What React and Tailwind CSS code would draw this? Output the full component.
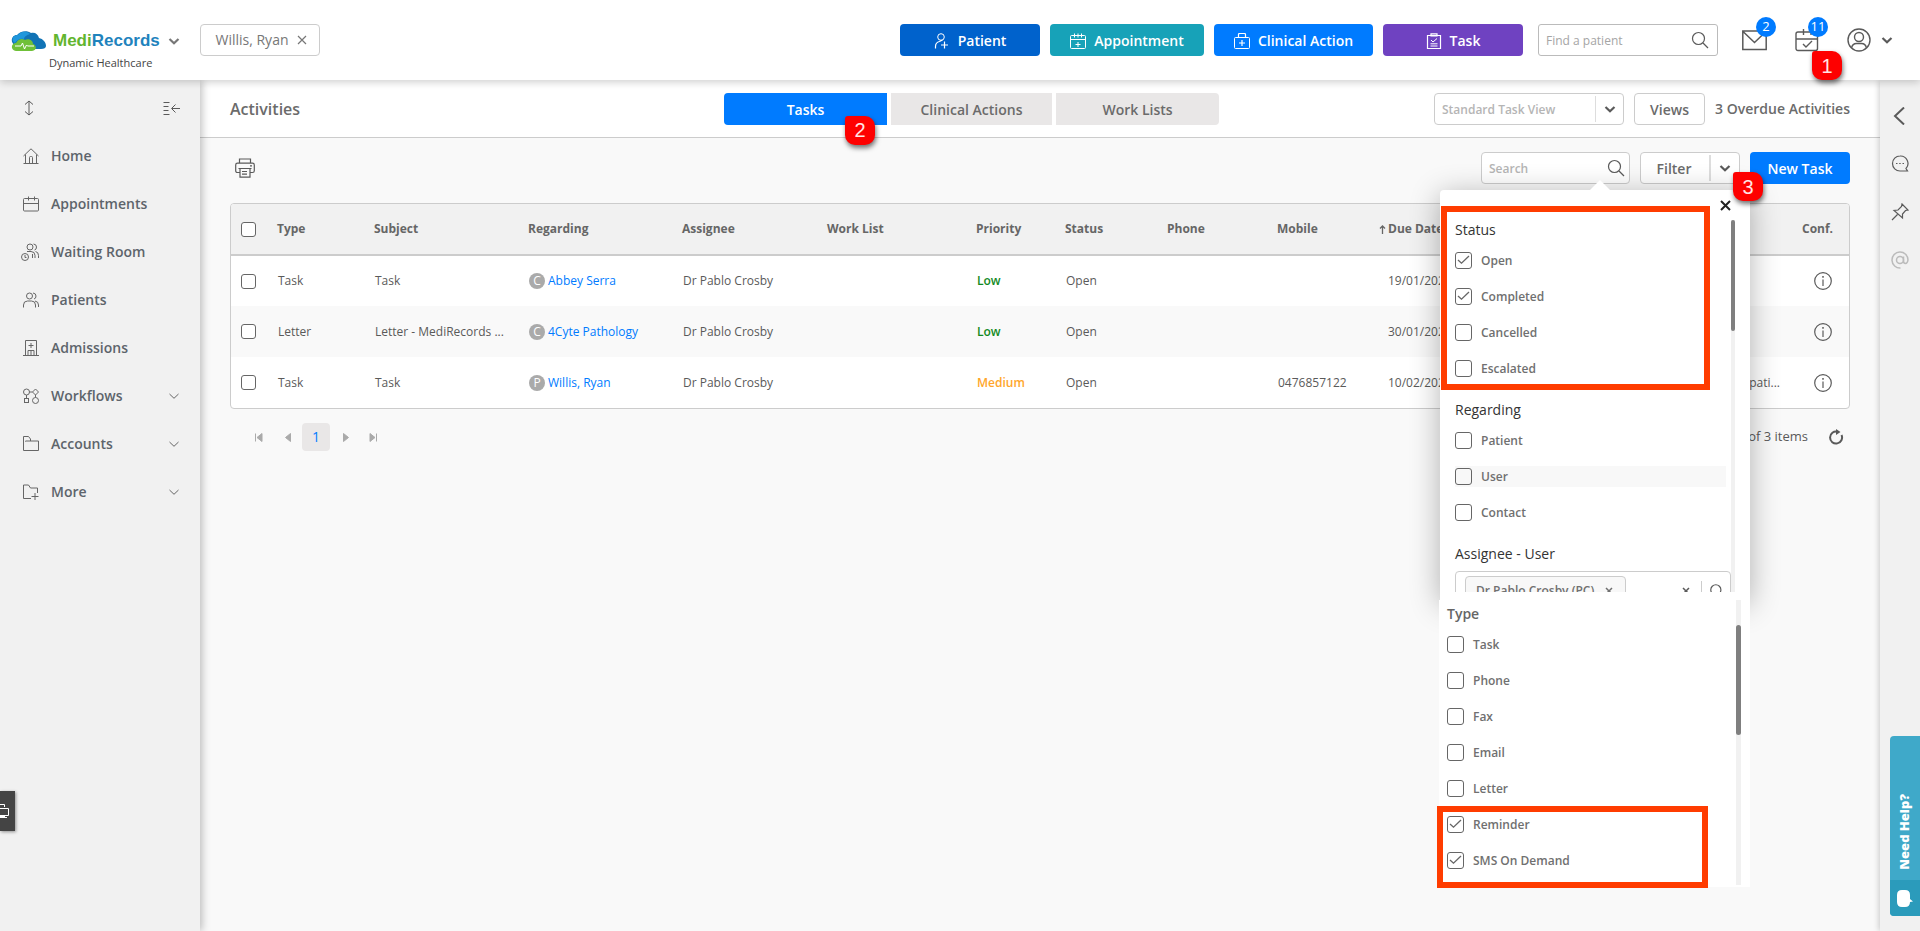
import React from 'react';

const Icon = ({ size = 16, box = 16, width = 1, className = '', children }) => (
  <svg
    width={size}
    height={size}
    viewBox={`0 0 ${box} ${box}`}
    fill="none"
    stroke="currentColor"
    strokeWidth={width}
    aria-hidden="true"
    className={`shrink-0 ${className}`}
  >
    {children}
  </svg>
);

const HomeIcon = () => (
  <Icon>
    <path d="M.5 8 8 .8 15.500 8M2.500 6.500v8.500M13.500 6.500v8.500M.500 15.500h15M6.500 15V9.500q0-1 1-1h1q1 0 1 1V15" />
  </Icon>
);

const CalendarIcon = () => (
  <Icon>
    <rect x=".5" y="2.500" width="15" height="12.500" rx="1" />
    <path d="M.5 7.500h15M5.500.500v4M11.500.500v4" />
  </Icon>
);

const WaitingIcon = () => (
  <Icon size={18} box={18} className="-ml-0.5">
    <circle cx="9" cy="4" r="3" />
    <path d="M6 8.500h4q4 0 4 4v2.500M12.500 1q3 .3 3 3t-2 3M14.500 8.500q3 .5 3 4V15M11.500 11v4" />
    <circle cx="4" cy="14" r="3.500" />
    <path d="M4 12v2.500h1.500" />
  </Icon>
);

const PatientsIcon = () => (
  <Icon>
    <circle cx="6.500" cy="4" r="3" />
    <path d="M.5 15.500v-2.500q0-4 4-4h4q4 0 4 4v2.500M10 1q3 .3 3 3t-2 3M12 9q3.500.5 3.500 4v2" />
  </Icon>
);

const AdmissionsIcon = () => (
  <Icon>
    <path d="M0 15.500h16M2.500 15V.500h11V15M8 3v5M5.500 5.500h5M5 15v-4.500h6V15M8 10.500V15" />
  </Icon>
);

const WorkflowsIcon = () => (
  <Icon>
    <circle cx="3.500" cy="4" r="3" />
    <path d="m12.500 1 3 3-3 3-3-3zM6.500 4h3M3.500 7v3.500M12.500 7v2.500" />
    <rect x="1.500" y="10.500" width="4" height="4" />
    <circle cx="12.500" cy="12.500" r="3" />
  </Icon>
);

const AccountsIcon = () => (
  <Icon>
    <path d="M2.500 5.500V5h13v9.500H.500V.500h5l2 2.500v2" />
  </Icon>
);

const MoreIcon = () => (
  <Icon>
    <path d="M8 14.500H.500V1h5l2 3h7v5M12 9v7M8.500 12.500h7" />
  </Icon>
);

const SearchIcon = () => (
  <Icon size={18} box={18} width={1.200}>
    <circle cx="7.500" cy="7.500" r="6" />
    <path d="m12 12 5 5" />
  </Icon>
);

const ChevronDown = ({ thin }) => (
  <Icon size={12} box={12} width={thin ? 1 : 2.200}>
    <path d="M1.500 4 6 8.300 10.500 4" />
  </Icon>
);

const InfoIcon = () => (
  <Icon size={18} box={18} width={1.200}>
    <circle cx="9" cy="9" r="8.300" />
    <path d="M9 7.500V14" />
    <path d="M9 4v1.800" strokeWidth="1.500" />
  </Icon>
);

const navItems = [
  { label: 'Home', icon: HomeIcon },
  { label: 'Appointments', icon: CalendarIcon },
  { label: 'Waiting Room', icon: WaitingIcon },
  { label: 'Patients', icon: PatientsIcon },
  { label: 'Admissions', icon: AdmissionsIcon },
  { label: 'Workflows', icon: WorkflowsIcon, expandable: true },
  { label: 'Accounts', icon: AccountsIcon, expandable: true },
  { label: 'More', icon: MoreIcon, expandable: true },
];

const tasks = [
  { type: 'Task', subject: 'Task', kind: 'C', regarding: 'Abbey Serra', assignee: 'Dr Pablo Crosby', priority: 'Low', status: 'Open', mobile: '', due: '19/01/2023', note: '' },
  { type: 'Letter', subject: 'Letter - MediRecords ...', kind: 'C', regarding: '4Cyte Pathology', assignee: 'Dr Pablo Crosby', priority: 'Low', status: 'Open', mobile: '', due: '30/01/2023', note: '' },
  { type: 'Task', subject: 'Task', kind: 'P', regarding: 'Willis, Ryan', assignee: 'Dr Pablo Crosby', priority: 'Medium', status: 'Open', mobile: '0476857122', due: '10/02/2023', note: 'pati...' },
];

const statusOptions = [
  { label: 'Open', checked: true },
  { label: 'Completed', checked: true },
  { label: 'Cancelled' },
  { label: 'Escalated' },
];

const regardingOptions = [
  { label: 'Patient' },
  { label: 'User', active: true },
  { label: 'Contact' },
];

const typeOptions = [
  { label: 'Task' },
  { label: 'Phone' },
  { label: 'Fax' },
  { label: 'Email' },
  { label: 'Letter' },
  { label: 'Reminder', checked: true },
  { label: 'SMS On Demand', checked: true },
];

const Step = ({ n, className }) => (
  <span
    className={`absolute z-40 flex h-[29px] w-[30px] items-center justify-center rounded-[10px] rounded-tl-[3px] bg-[#fe0000] font-['Liberation_Sans',sans-serif] text-xl font-normal text-white/90 shadow-[1px_3px_5px_rgba(0,0,0,0.55)] ${className}`}
  >
    {n}
  </span>
);

const CheckRow = ({ label, checked, active }) => (
  <label className={`mb-[15px] flex h-[21px] items-center gap-[9px] ${active ? 'bg-[#f8f8f8]' : ''}`}>
    <span className="relative flex h-[17px] w-[17px]">
      <input
        type="checkbox"
        defaultChecked={checked}
        className="peer h-[17px] w-[17px] appearance-none rounded-[3px] border border-[#666]"
      />
      <svg
        viewBox="0 0 17 17"
        aria-hidden="true"
        className="pointer-events-none absolute inset-0 hidden fill-none stroke-[#666] peer-checked:block"
      >
        <path d="m3 8 3.500 3.200L14 4" strokeWidth="1.300" />
      </svg>
    </span>
    <span className="text-xs font-semibold text-[#707070]">{label}</span>
  </label>
);

const Logo = () => (
  <svg width="36" height="21" viewBox="0 0 36 21" aria-hidden="true">
    <path d="M4 14C-1 12 0 4 6 4c3-4 10-5 14-2 4-1 7 1 8 5 4 1 7 4 7 8 0 2-2 3-5 3H8z" fill="#1173b5" />
    <path d="M4 12C0 10 1 4 7 4c3-4 9-4 12-1-4 1-6 3-6 5-4-1-7 1-9 4z" fill="#1f97dc" />
    <path d="M5 20c-6-1-5-8 0-8 2-4 6-5 9-3 3-2 8 0 8 4 4 1 4 7-1 7z" fill="#6fc038" />
    <path d="M4 15h6l1.500-3 2 6 2-4 1 1H23" fill="none" stroke="#fff" strokeWidth="1" />
  </svg>
);

const Header = () => (
  <header className="relative z-30 flex h-20 items-center bg-white shadow-[0_2px_8px_rgba(0,0,0,0.2)]">
    <div className="w-[200px] shrink-0 pt-[22px] pl-[11px]">
      <div className="flex h-6 items-center">
        <Logo />
        <span className="ml-1.5 font-['Liberation_Sans',sans-serif] text-[17px] leading-6 font-bold text-[#1f83bd]">
          <span className="text-[#62b52f]">Medi</span>Records
        </span>
        <button aria-label="Switch practice" className="ml-2 text-[#777]">
          <ChevronDown />
        </button>
      </div>
      <p className="pl-[38px] text-[11px] leading-5 text-[#444]">Dynamic Healthcare</p>
    </div>

    <button className="flex h-8 w-[120px] items-center justify-center gap-2 rounded border border-[#ccc] pl-0.5 text-sm text-[#777]">
      Willis, Ryan
      <Icon size={10} box={10} width={1.200}>
        <path d="m1 1 8 8M9 1 1 9" />
      </Icon>
    </button>

    <div className="ml-auto flex items-center gap-2.5 text-sm font-semibold text-white">
      <button className="flex h-8 w-[140px] items-center justify-center gap-2 rounded bg-[#0062cc] pt-0.5">
        <Icon>
          <circle cx="7" cy="4" r="3.300" />
          <path d="M1.500 15.500v-2q0-4 4-5l3-1.500M7 12h7M10.500 8.500v7" strokeWidth="1.200" />
        </Icon>
        Patient
      </button>
      <button className="flex h-8 w-[154px] items-center justify-center gap-2 rounded bg-[#17a2b8] pt-0.5">
        <Icon>
          <rect x=".5" y="2.500" width="15" height="13" rx="1" />
          <path d="M.5 6.500h15M4.500.500v4M8 .500v4M11.500.500v4M8 9v5M5.500 11.500h5" />
        </Icon>
        Appointment
      </button>
      <button className="flex h-8 w-[159px] items-center justify-center gap-2 rounded bg-[#007bff] pt-0.5">
        <Icon>
          <rect x=".5" y="4.500" width="15" height="11" rx="1" />
          <path d="M4.500 4V1.500q0-1 1-1h5q1 0 1 1V4M8 7v6M5 10h6" strokeWidth="1.200" />
        </Icon>
        Clinical Action
      </button>
      <button className="flex h-8 w-[140px] items-center justify-center gap-2 rounded bg-[#6f42c1] pt-0.5">
        <Icon>
          <path d="M1.500 2.500h13v13h-13zM5 .8h6v2H5z" strokeWidth="1.200" />
          <path d="m5 7 2 2 4-3.500M4.500 10.800h7M4.500 13h7" />
        </Icon>
        Task
      </button>
    </div>

    <label className="ml-[15px] flex h-8 w-[180px] items-center rounded-[3px] border border-[#bbb] pr-2 pl-[7px]">
      <input
        type="text"
        aria-label="Find a patient"
        placeholder="Find a patient"
        className="min-w-0 flex-1 pt-0.5 text-xs font-medium outline-none placeholder:text-[#a5a5a5]"
      />
      <SearchIcon />
    </label>

    <button aria-label="Messages" className="relative ml-6">
      <Icon size={25} box={25} width={1.500}>
        <path d="M.8 3h23.400v18.500H.800zM1 3.500l11.500 11L24 3.500" />
      </Icon>
      <span className="absolute -top-[11px] left-3.5 flex h-5 w-5 items-center justify-center rounded-full bg-[#007bff] text-[13px] text-white">2</span>
    </button>
    <div className="relative ml-7">
      <button aria-label="Activities" className="relative block">
        <Icon size={24} box={24} width={1.400}>
          <rect x="1" y="4" width="21.500" height="18.500" rx="2" />
          <path d="M1 11h21.500M8.500 1v6M16 1v6m-8 9 3 3 6-6" />
        </Icon>
        <span className="absolute -top-[11px] left-[13px] flex h-5 w-5 items-center justify-center rounded-full bg-[#007bff] text-[13px] text-white">11</span>
      </button>
      <Step n="1" className="top-[23px] left-[17px]" />
    </div>
    <button aria-label="Account" className="mr-[27px] ml-7 flex items-center gap-2.5">
      <Icon size={24} box={24} width={1.400}>
        <circle cx="12" cy="12" r="11" />
        <circle cx="12" cy="9" r="4.500" />
        <path d="M4.500 20q1-4.500 5-4.500h5q4 0 5 4.500" />
      </Icon>
      <ChevronDown />
    </button>
  </header>
);

const Sidebar = () => (
  <aside className="z-10 w-[200px] shrink-0 bg-[#f1f1f1] shadow-[2px_0_8px_rgba(0,0,0,0.25)]">
    <div className="flex h-[52px] items-center justify-between pt-1 pr-5 pl-[21px]">
      <button aria-label="Resize menu">
        <Icon>
          <path d="M8 1v14M4 4.500 8 1l4 3.500M4 11.500 8 15l4-3.500" />
        </Icon>
      </button>
      <button aria-label="Collapse menu">
        <Icon size={17} box={17}>
          <path d="M.5 2.500h6M.500 6.500h5M.500 10.500h5M.500 14.500h6M17 8.500H9m3.500-4-4 4 4 4" />
        </Icon>
      </button>
    </div>
    <nav>
      {navItems.map((item) => (
        <a key={item.label} href="#" className="flex h-12 items-center pr-5 pl-[23px] text-sm font-semibold text-[#5d646b]">
          <span className="flex w-7 items-center text-[#666]">
            <item.icon />
          </span>
          <span>{item.label}</span>
          {item.expandable && (
            <span className="ml-auto text-[#666]">
              <ChevronDown thin />
            </span>
          )}
        </a>
      ))}
    </nav>
  </aside>
);

const SubHeader = () => (
  <div className="flex h-[58px] items-center border-b border-[#ccc] bg-white px-[30px]">
    <h1 className="w-[494px] text-base font-semibold text-[#6b6b6b]">Activities</h1>
    <div className="flex gap-1 text-sm font-semibold">
      <div className="relative">
        <button className="h-8 w-[163px] rounded-l bg-[#007bff] pt-0.5 text-white">Tasks</button>
        <Step n="2" className="top-[23px] left-[121px]" />
      </div>
      <button className="h-8 w-[161px] bg-[#e9e7e7] pt-0.5 text-[#6b6b6b]">Clinical Actions</button>
      <button className="h-8 w-[163px] rounded-r bg-[#e9e7e7] pt-0.5 text-[#6b6b6b]">Work Lists</button>
    </div>
    <div className="ml-auto flex items-center gap-2.5">
      <label className="flex h-8 w-[190px] items-center rounded border border-[#ccc] pl-[7px]">
        <input
          type="text"
          aria-label="Task view"
          placeholder="Standard Task View"
          className="min-w-0 flex-1 pt-0.5 text-xs font-semibold outline-none placeholder:text-[#b5b5b5]"
        />
        <button aria-label="Choose view" className="flex h-[26px] w-7 items-center justify-center border-l border-[#ddd]">
          <ChevronDown />
        </button>
      </label>
      <button className="h-8 w-[71px] rounded border border-[#ccc] pt-0.5 text-sm font-semibold text-[#6b6b6b]">Views</button>
      <span className="w-[135px] text-right text-sm font-semibold text-[#6b6b6b]">3 Overdue Activities</span>
    </div>
  </div>
);

const FilterPanel = () => (
  <div className="absolute top-[38px] right-[100px] z-20 w-[310px]">
    <div className="relative h-[410px] rounded-t bg-white pt-[30px] shadow-[0_5px_30px_rgba(0,0,0,0.3)]">
      <span className="absolute -top-2.5 left-[150px] border-x-10 border-b-10 border-x-transparent border-b-white" />
      <button aria-label="Close filter" className="absolute top-2.5 right-[19px] text-[#222]">
        <Icon size={11} box={11} width={2}>
          <path d="m1 1 9 9M10 1l-9 9" />
        </Icon>
      </button>
      <div className="flex h-[372px] overflow-hidden pl-[15px]">
        <div className="w-[276px] shrink-0">
          <h2 className="mb-[9px] h-[21px] text-sm text-[#333]">Status</h2>
          {statusOptions.map((o) => (
            <CheckRow key={o.label} {...o} />
          ))}
          <h2 className="mt-[21px] mb-[9px] h-[21px] text-sm text-[#333]">Regarding</h2>
          <div className="pr-[5px]">
            {regardingOptions.map((o) => (
              <CheckRow key={o.label} {...o} />
            ))}
          </div>
          <h2 className="mt-[21px] h-[21px] text-sm text-[#333]">Assignee - User</h2>
          <div className="mt-[6px] flex h-10 items-center rounded border border-[#ccc] pr-1.5 pl-[9px]">
            <button className="flex h-[30px] w-[161px] items-center justify-between rounded border border-[#ccc] bg-[#f8f8f8] pr-3 pl-2.5 text-xs font-semibold text-[#707070]">
              Dr Pablo Crosby (PC)
              <Icon size={8} box={8} width={1.500}>
                <path d="m1 1 6 6M7 1 1 7" />
              </Icon>
            </button>
            <span className="ml-auto flex h-5 w-5 items-center border-r border-[#ccc]">
              <Icon size={8} box={8} width={1.500}>
                <path d="m1 1 6 6M7 1 1 7" />
              </Icon>
            </span>
            <span className="ml-2">
              <Icon size={14} box={18} width={1.500}>
                <circle cx="7.500" cy="7.500" r="6.500" />
                <path d="m12 12 5 5" />
              </Icon>
            </span>
          </div>
        </div>
        <div className="w-1 bg-[#f1f1f1]">
          <div className="h-[111px] rounded-full bg-[#7f7f7f]" />
        </div>
      </div>
      <div className="pointer-events-none absolute top-4 left-px h-[184px] w-[269px] border-6 border-[#ff3c00]" />
    </div>

    <div className="relative -ml-px flex h-[287px] bg-white">
      <div className="w-[297px] shrink-0 pt-1 pl-2">
        <h2 className="mb-[9px] h-[21px] text-sm font-semibold text-[#666]">Type</h2>
        {typeOptions.map((o) => (
          <CheckRow key={o.label} {...o} />
        ))}
      </div>
      <div className="h-[285px] w-[5px] bg-[#f1f1f1] pt-[25px]">
        <div className="h-[110px] rounded-full bg-[#7f7f7f]" />
      </div>
      <div className="pointer-events-none absolute top-[206px] -left-0.5 h-[82px] w-[271px] border-6 border-[#ff3c00]" />
    </div>
  </div>
);

const Toolbar = () => (
  <div className="relative flex h-8 items-center gap-2.5">
    <button aria-label="Print" className="mr-auto ml-[5px]">
      <Icon size={20} box={20} width={1.200}>
        <path d="M4.500 5V1h11v4M4.500 14.500H2.500q-1.800 0-1.800-1.800V7q0-1.800 1.800-1.800h15q1.800 0 1.800 1.800v5.700q0 1.800-1.800 1.800h-2M3.500 10.500h13M5 10.500v8.700h10v-8.700M7 13.500h5M7 16.200h5M15 7.800h2" />
      </Icon>
    </button>
    <label className="flex h-8 w-[149px] items-center rounded border border-[#ccc] bg-white pr-1 pl-[7px]">
      <input
        type="text"
        aria-label="Search"
        placeholder="Search"
        className="min-w-0 flex-1 pt-0.5 text-xs font-semibold outline-none placeholder:text-[#b5b5b5]"
      />
      <SearchIcon />
    </label>
    <div className="relative flex h-8 w-[100px] items-center rounded border border-[#ccc] bg-white">
      <button className="flex-1 pt-0.5 pr-0.5 text-sm font-semibold text-[#6b6b6b]">Filter</button>
      <button aria-label="Filter options" className="flex h-[26px] w-[30px] items-center justify-center border-l-2 border-[#ddd]">
        <ChevronDown />
      </button>
      <Step n="3" className="top-[19px] left-[92px]" />
    </div>
    <button className="h-8 w-[100px] rounded bg-[#007bff] pt-0.5 text-sm font-semibold text-white">New Task</button>
    <FilterPanel />
  </div>
);

const RowCheckbox = ({ label }) => (
  <input
    type="checkbox"
    aria-label={label}
    className="block h-[15px] w-[15px] appearance-none rounded-[3px] border border-[#666] bg-white"
  />
);

const TaskTable = () => (
  <div className="mt-[19px] overflow-hidden rounded border border-[#ccc] bg-white">
    <table className="w-full table-fixed text-left text-xs">
      <colgroup>
        <col className="w-9" />
        <col className="w-[97px]" />
        <col className="w-[154px]" />
        <col className="w-[154px]" />
        <col className="w-[145px]" />
        <col className="w-[149px]" />
        <col className="w-[89px]" />
        <col className="w-[102px]" />
        <col className="w-[110px]" />
        <col className="w-[101px]" />
        <col className="w-[142px]" />
        <col />
        <col className="w-[57px]" />
      </colgroup>
      <thead>
        <tr className="h-[51px] border-b-2 border-[#ccc] bg-[#f1f1f1] text-[#666] [&>th]:pl-2.5">
          <th><RowCheckbox label="Select all" /></th>
          <th>Type</th>
          <th>Subject</th>
          <th>Regarding</th>
          <th>Assignee</th>
          <th>Work List</th>
          <th>Priority</th>
          <th>Status</th>
          <th>Phone</th>
          <th>Mobile</th>
          <th>
            <span className="flex items-center gap-px">
              <Icon size={9} box={9} width={1.300}>
                <path d="M4.500 9V1M2 3.500 4.500 1 7 3.500" />
              </Icon>
              Due Date
            </span>
          </th>
          <th />
          <th>Conf.</th>
        </tr>
      </thead>
      <tbody>
        {tasks.map((t, i) => (
          <tr key={i} className="h-[51px] even:bg-[#f9f9f9] [&>td]:pl-[11px]">
            <td className="pl-2.5!"><RowCheckbox label={`Select ${t.regarding}`} /></td>
            <td>{t.type}</td>
            <td className="whitespace-nowrap">{t.subject}</td>
            <td>
              <span className="flex items-center gap-[3px]">
                <span className="flex h-4 w-4 items-center justify-center rounded-full bg-[#aaa] text-white">{t.kind}</span>
                <a href="#" className="text-[#007bff]">{t.regarding}</a>
              </span>
            </td>
            <td>{t.assignee}</td>
            <td />
            <td className={`font-semibold ${t.priority === 'Low' ? 'text-[#128a1f]' : 'text-[#ffa62b]'}`}>{t.priority}</td>
            <td>{t.status}</td>
            <td />
            <td>{t.mobile}</td>
            <td className="pl-5!">{t.due}</td>
            <td className="pr-3 text-right">{t.note}</td>
            <td>
              <button aria-label="Details" className="ml-[11px] block">
                <InfoIcon />
              </button>
            </td>
          </tr>
        ))}
      </tbody>
    </table>
  </div>
);

const Pager = () => (
  <div className="mt-3.5 flex h-7 items-center justify-between pr-1.5 pl-6">
    <div className="flex items-center text-[#aaa]">
      <button aria-label="First page" className="mr-5">
        <Icon size={9} box={9}>
          <path d="M1.500.500v8M8 .500v8l-5-4z" fill="currentColor" />
        </Icon>
      </button>
      <button aria-label="Previous page" className="mr-2.5">
        <Icon size={9} box={9}>
          <path d="M7.500.500v8l-5-4z" fill="currentColor" />
        </Icon>
      </button>
      <button className="h-7 w-7 rounded bg-[#e9e7e7] text-sm text-[#007bff]">1</button>
      <button aria-label="Next page" className="mr-[18px] ml-3">
        <Icon size={9} box={9}>
          <path d="M1.500.500v8l5-4z" fill="currentColor" />
        </Icon>
      </button>
      <button aria-label="Last page">
        <Icon size={9} box={9}>
          <path d="M7.500.500v8M1 .500v8l5-4z" fill="currentColor" />
        </Icon>
      </button>
    </div>
    <div className="flex items-center gap-5">
      <span className="text-[13px]">1 - 3 of 3 items</span>
      <button aria-label="Refresh">
        <Icon size={16} box={16} width={2}>
          <path d="M13.500 6A6 6 0 1 1 9.500 2.700" />
          <path d="m8 0 4.500 3L8 6z" fill="currentColor" stroke="none" />
        </Icon>
      </button>
    </div>
  </div>
);

const RightRail = () => (
  <aside className="z-10 flex w-10 shrink-0 flex-col items-center bg-[#f1f1f1] pt-[27px] shadow-[-1px_0_6px_rgba(0,0,0,0.2)]">
    <button aria-label="Expand panel">
      <Icon size={18} box={18} width={2}>
        <path d="m13 .500-9 8.500 9 8.500" />
      </Icon>
    </button>
    <button aria-label="Chat" className="mt-[30px]">
      <Icon size={18} box={18} width={1.200}>
        <path d="M9 1a7.500 7.500 0 1 0 0 15h7.500l-1.500-2.500A7.500 7.500 0 0 0 9 1z" />
        <path d="M5 8.500h1.500M8.200 8.500h1.500M11.500 8.500H13" />
      </Icon>
    </button>
    <button aria-label="Pin" className="mt-[30px]">
      <Icon size={18} box={18} width={1.200}>
        <path d="m11 1 6 6-2.500.5-3 3.500v4L3 7.500l4-.500L10.500 3.500zM6.500 11.500 1 17" />
      </Icon>
    </button>
    <button aria-label="Mentions" className="mt-[30px] text-[#bbb]">
      <Icon size={18} box={18} width={1.500}>
        <circle cx="9" cy="9" r="3.500" />
        <path d="M12.500 5.500V10q0 2.500 2 2.500T17 9A8 8 0 1 0 9.500 17" />
      </Icon>
    </button>
  </aside>
);

const App = () => (
  <div className="flex min-h-screen flex-col bg-[#f9f9f9] font-['Open_Sans',sans-serif] text-[#5a5a5a]">
    <Header />
    <div className="flex flex-1">
      <Sidebar />
      <main className="min-w-0 flex-1">
        <SubHeader />
        <div className="px-[30px] pt-3.5">
          <Toolbar />
          <TaskTable />
          <Pager />
        </div>
      </main>
      <RightRail />
    </div>

    <button aria-label="Screen share" className="fixed bottom-[100px] left-0 z-20 flex h-10 w-[15px] items-center bg-[#444] text-white shadow-[1px_1px_3px_rgba(0,0,0,0.4)]">
      <Icon size={14} box={14}>
        <path d="M0 .500h4.500V3M0 4.500h8.500v7H0M0 13.500h7" />
        <path d="M0 12.500h5" />
      </Icon>
    </button>
    <button className="fixed right-0 bottom-[15px] z-20 flex h-[180px] w-[30px] flex-col items-center justify-end overflow-hidden rounded-l bg-[#3fa9c9] text-white">
      <span className="mb-2.5 rotate-180 text-[13px] font-extrabold [writing-mode:vertical-rl]">Need Help?</span>
      <span className="flex h-9 w-full items-center justify-center bg-[#2b9bbb]">
        <svg width="16" height="17" viewBox="0 0 16 17" fill="currentColor" aria-hidden="true">
          <path d="M5 0h3q5 0 5 5v4l3 2.500-3 .5q0 5-5 5H5q-5 0-5-5V5q0-5 5-5z" />
        </svg>
      </span>
    </button>
  </div>
);

export default App;
